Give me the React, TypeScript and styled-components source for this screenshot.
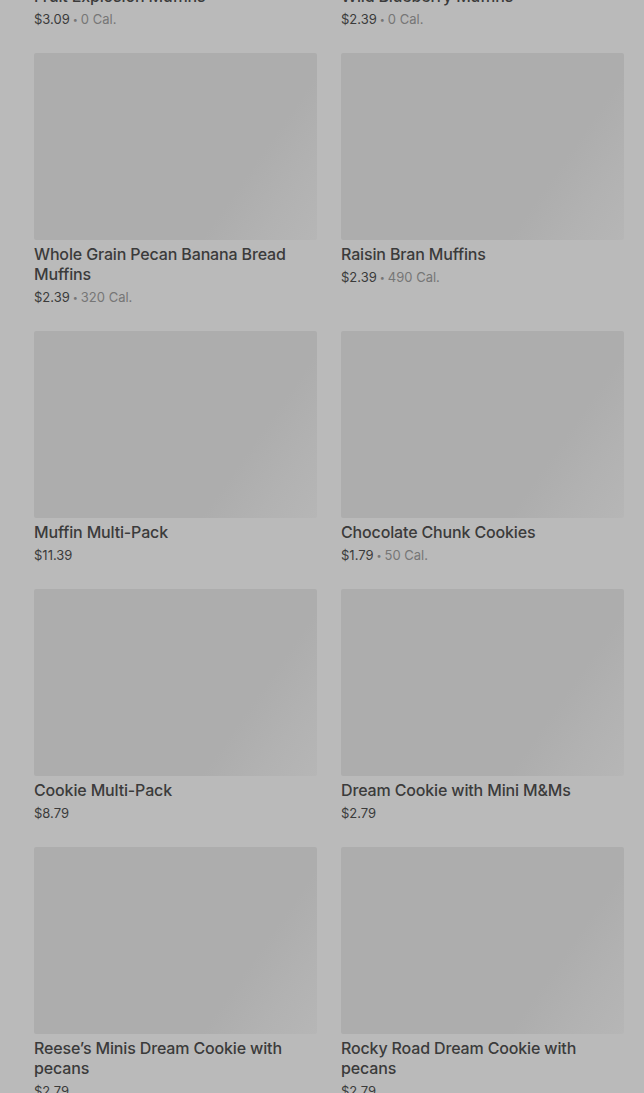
import React from "react";
import styled, { createGlobalStyle } from "styled-components";

const Global = createGlobalStyle`
  html, body { margin: 0; padding: 0; background: #bababa; }
  body { font-family: Inter, "Noto Sans", Arial, sans-serif; overflow: hidden; }
`;

const Page = styled.div`
  height: 1093px;
  overflow: hidden;
  background: #bababa;
`;

const Grid = styled.div`
  display: grid;
  grid-template-columns: 283px 283px;
  column-gap: 24px;
  row-gap: 24px;
  padding: 0 20px 0 34px;
  margin-top: -205px;
`;

const Card = styled.div`
  display: flex;
  flex-direction: column;
`;

const Thumb = styled.div`
  height: 187px;
  border-radius: 2px;
  background: linear-gradient(125deg, #adadad 0%, #adadad 72%, #b2b2b2 86%, #b6b6b6 100%);
`;

const Title = styled.div`
  margin-top: 4px;
  font-size: 16px;
  line-height: 20px;
  font-weight: 500;
  letter-spacing: -0.15px;
  color: #3b3b3b;
`;

const Meta = styled.div`
  margin-top: 3px;
  height: 20px;
  font-size: 13px;
  line-height: 20px;
  color: #3b3b3b;
`;

const Cal = styled.span`
  color: #767676;
`;

const Dot = styled.span`
  font-size: 9px;
  line-height: 0;
  margin: 0 3px;
  position: relative;
  top: -1px;
  color: #767676;
`;

type Item = { name: string; price: string; cal?: string };

const items: Item[] = [
  { name: "Fruit Explosion Muffins", price: "$3.09", cal: "0 Cal." },
  { name: "Wild Blueberry Muffins", price: "$2.39", cal: "0 Cal." },
  { name: "Whole Grain Pecan Banana Bread Muffins", price: "$2.39", cal: "320 Cal." },
  { name: "Raisin Bran Muffins", price: "$2.39", cal: "490 Cal." },
  { name: "Muffin Multi-Pack", price: "$11.39" },
  { name: "Chocolate Chunk Cookies", price: "$1.79", cal: "50 Cal." },
  { name: "Cookie Multi-Pack", price: "$8.79" },
  { name: "Dream Cookie with Mini M&Ms", price: "$2.79" },
  { name: "Reese’s Minis Dream Cookie with pecans", price: "$2.79" },
  { name: "Rocky Road Dream Cookie with pecans", price: "$2.79" },
];

export default function App() {
  return (
    <Page>
      <Global />
      <Grid>
        {items.map((it) => (
          <Card key={it.name}>
            <Thumb />
            <Title>{it.name}</Title>
            <Meta>
              {it.price}
              {it.cal && (
                <>
                  <Dot>•</Dot>
                  <Cal>{it.cal}</Cal>
                </>
              )}
            </Meta>
          </Card>
        ))}
      </Grid>
    </Page>
  );
}
